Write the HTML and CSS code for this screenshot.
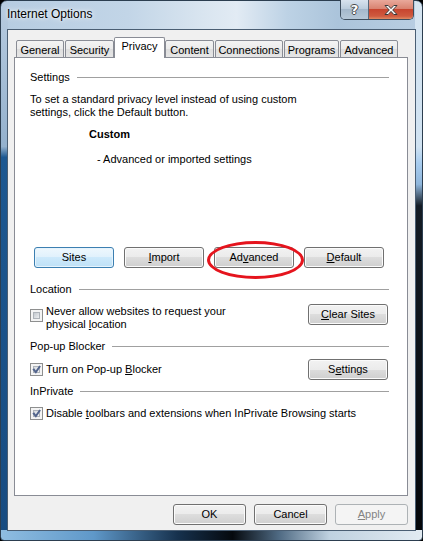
FILE: index.html
```html
<!DOCTYPE html>
<html lang="en">

<head>
    <meta charset="UTF-8">
    <meta name="viewport" content="width=device-width, initial-scale=1.0">
    <title>Internet Options</title>
    <link rel="stylesheet" href="styles.css">
</head>

<body>
    <div class="window">
        <div class="titlebar">
            <p class="title">Internet Options</p>
            <div class="caption">
                <span class="cap-btn help">?</span>
                <span class="cap-btn close">
                    <svg width="16" height="12" viewBox="0 0 16 12">
                        <path d="M2 1.5h3.2L8 4.6l2.8-3.1H14L9.7 6 14 10.5h-3.2L8 7.4l-2.8 3.1H2L6.3 6z" fill="#fff" stroke="#3a3a3a" stroke-width="1" stroke-linejoin="round"/>
                    </svg>
                </span>
            </div>
        </div>

        <div class="client">
            <div class="tabs">
                <span class="tab w-general">General</span>
                <span class="tab w-security">Security</span>
                <span class="tab w-privacy active">Privacy</span>
                <span class="tab w-content">Content</span>
                <span class="tab w-connections">Connections</span>
                <span class="tab w-programs">Programs</span>
                <span class="tab w-advanced">Advanced</span>
            </div>

            <div class="panel">
                <div class="group-title">Settings</div>
                <p class="desc">To set a standard privacy level instead of using custom<br>settings, click the Default button.</p>
                <p class="level">Custom</p>
                <p class="level-info">- Advanced or imported settings</p>

                <div class="btn-row">
                    <button class="btn default">Sites</button>
                    <button class="btn"><u>I</u>mport</button>
                    <button class="btn marked">Ad<u>v</u>anced<span class="circle"></span></button>
                    <button class="btn"><u>D</u>efault</button>
                </div>

                <div class="group-title location-title">Location</div>
                <div class="option first">
                    <div class="check-label top">
                        <span class="check"></span>
                        <span>Never allow websites to request your<br>physical <u>l</u>ocation</span>
                    </div>
                    <button class="btn side"><u>C</u>lear Sites</button>
                </div>

                <div class="group-title">Pop-up Blocker</div>
                <div class="option second">
                    <div class="check-label">
                        <span class="check checked">
                            <svg width="13" height="13" viewBox="0 0 13 13"><path d="M2.4 6.6l1.7-1.3 1.7 2.3 3.5-5.2 1.6 1.1-5 7.2z" fill="#52648c"/></svg>
                        </span>
                        <span>Turn on Pop-up <u>B</u>locker</span>
                    </div>
                    <button class="btn side">S<u>e</u>ttings</button>
                </div>

                <div class="group-title private-title">InPrivate</div>
                <div class="option third">
                    <div class="check-label">
                        <span class="check checked">
                            <svg width="13" height="13" viewBox="0 0 13 13"><path d="M2.4 6.6l1.7-1.3 1.7 2.3 3.5-5.2 1.6 1.1-5 7.2z" fill="#52648c"/></svg>
                        </span>
                        <span>Disable <u>t</u>oolbars and extensions when InPrivate Browsing starts</span>
                    </div>
                </div>
            </div>

            <div class="footer">
                <button class="btn foot">OK</button>
                <button class="btn foot">Cancel</button>
                <button class="btn foot" disabled><u>A</u>pply</button>
            </div>
        </div>
    </div>
</body>

</html>
```

FILE: styles.css
```css
* {
    margin: 0;
    padding: 0;
}

body {
    font-family: "Liberation Sans", Arial, sans-serif;
    font-size: 11px;
    line-height: 13px;
    color: #000;
    background-color: #000;
    width: 423px;
    height: 541px;
    overflow: hidden;
}

/* window frame */
.window {
    box-sizing: border-box;
    width: 423px;
    height: 541px;
    display: flex;
    flex-direction: column;
    padding: 0 6px 9px 6px;
    border: 1px solid #2c3e50;
    border-radius: 7px 7px 4px 4px;
    background:
        linear-gradient(to right, #8fbde1 0%, #5f98c9 22%, #16314d 42%, #05090e 55%, #4f6a83 66%, #bfd1e0 78%, #e2ebf2 100%) left bottom / 100% 10px no-repeat,
        linear-gradient(to bottom, #b8cce0 0%, #94b1cd 27%, #1d5891 29%, #174b80 100%) left top / 7px 100% no-repeat,
        linear-gradient(to bottom, #d6e5f1 0%, #d0e2f1 27%, #a9cdef 30%, #8fb6db 34%, #141c25 38%, #040609 100%) right top / 7px 100% no-repeat,
        linear-gradient(to right, #b6cce1 0%, #c2d5e7 30%, #d9e5f0 48%, #e2ebf4 56%, #bdd2e5 68%, #abc4db 80%, #b9cee2 100%);
}

.titlebar {
    display: flex;
    height: 28px;
}

.title {
    padding: 7px 0 0 0;
    font-size: 12px;
    line-height: 13px;
    color: #000;
    text-shadow: 0 0 6px rgba(255, 255, 255, 0.95), 0 0 3px rgba(255, 255, 255, 0.9);
}

.caption {
    display: flex;
    margin: -1px 2px 0 auto;
    height: 19px;
    border: 1px solid #3e4e5e;
    border-top: 0;
    border-radius: 0 0 5px 5px;
    overflow: hidden;
}

.cap-btn {
    display: flex;
    align-items: center;
    justify-content: center;
    height: 19px;
}

.help {
    width: 27px;
    border-right: 1px solid #56687a;
    background: linear-gradient(#d8e3ee, #bccddd 45%, #a4b8cb 50%, #b6c8d8);
    font-family: "DejaVu Sans", sans-serif;
    font-weight: bold;
    font-size: 13px;
    color: #fff;
    text-shadow: -1px 0 #4a4a4a, 1px 0 #4a4a4a, 0 -1px #4a4a4a, 0 1px #4a4a4a;
}

.close {
    width: 44px;
    background: linear-gradient(#e9a99b, #d98371 45%, #c7452f 50%, #cf5a3f 85%, #e08a63);
}

/* client area */
.client {
    flex: 1;
    display: flex;
    flex-direction: column;
    padding: 0 7px 5px 6px;
    border: 1px solid #4a5e73;
    background-color: #f0f0f0;
}

.tabs {
    position: relative;
    z-index: 1;
    display: flex;
    align-items: flex-end;
    gap: 1px;
    padding: 7px 0 0 2px;
    margin-bottom: -1px;
}

.tab {
    box-sizing: border-box;
    height: 18px;
    padding-top: 2px;
    line-height: 14px;
    text-align: center;
    border: 1px solid #898c95;
    border-radius: 2px 2px 0 0;
    background: linear-gradient(#f3f3f3, #ebebeb 50%, #dedede 50%, #e6e6e6);
}

.tab.active {
    height: 21px;
    padding-top: 1px;
    margin: 0 -1px;
    border-bottom: 0;
    background: #fff;
}

.w-general { width: 48px; }
.w-security { width: 49px; }
.w-privacy { width: 51px; }
.w-content { width: 49px; }
.w-connections { width: 68px; }
.w-programs { width: 55px; }
.w-advanced { width: 58px; }

.panel {
    flex: 1;
    padding: 13px 18px 0 15px;
    border: 1px solid #898c95;
    background-color: #fff;
}

.group-title {
    display: flex;
    align-items: center;
}

.group-title::after {
    content: "";
    flex: 1;
    height: 1px;
    margin-left: 7px;
    background-color: #a0a0a0;
}

.desc {
    margin-top: 9px;
}

.level {
    margin-top: 9px;
    padding-left: 59px;
    font-weight: bold;
}

.level-info {
    margin-top: 12px;
    padding-left: 67px;
}

/* buttons */
.btn {
    position: relative;
    box-sizing: border-box;
    width: 80px;
    height: 21px;
    font-family: inherit;
    font-size: 11px;
    line-height: 13px;
    color: #000;
    border: 1px solid #707070;
    border-radius: 3px;
    background: linear-gradient(#f2f2f2, #ebebeb 50%, #dddddd 50%, #cfcfcf);
    box-shadow: inset 0 0 0 1px #fbfbfb;
}

.btn.default {
    border-color: #3c7fb1;
    background: linear-gradient(#eef7fd, #e0f1fc 50%, #cde9fb 50%, #bfe1f6);
    box-shadow: inset 0 0 0 1px #e6f4fd;
}

.btn:disabled {
    color: #838383;
    border-color: #adb2b5;
    background: #f4f4f4;
    box-shadow: none;
}

.btn-row {
    display: flex;
    gap: 10px;
    margin-top: 81px;
    padding-left: 4px;
}

.circle {
    position: absolute;
    left: -8px;
    top: -7px;
    width: 97px;
    height: 38px;
    box-sizing: border-box;
    border: 3px solid #e5141d;
    border-radius: 50%;
}

.location-title {
    margin-top: 15px;
}

.option {
    display: flex;
    justify-content: space-between;
    align-items: center;
}

.option.first {
    align-items: flex-start;
    margin-top: 8px;
}

.option.second {
    margin-top: 6px;
    margin-bottom: 5px;
}

.option.third {
    margin-top: 9px;
}

.option.first + .group-title {
    margin-top: 9px;
}

.check-label {
    display: flex;
    align-items: center;
    gap: 3px;
}

.check-label.top {
    align-items: flex-start;
    margin-top: 1px;
}

.check-label.top .check {
    margin-top: 4px;
}

.side {
    margin-right: 1px;
}

.check {
    position: relative;
    flex: none;
    box-sizing: border-box;
    width: 13px;
    height: 13px;
    padding: 2px;
    border: 1px solid #8e8f8f;
    background-color: #f4f4f4;
}

.check::before {
    content: "";
    display: block;
    box-sizing: border-box;
    width: 100%;
    height: 100%;
    border: 1px solid #aeb3b9;
    background: linear-gradient(135deg, #c4c9cf, #eceef0);
}

.check.checked::before {
    background: linear-gradient(135deg, #d6dade, #f4f5f6);
}

.check svg {
    position: absolute;
    left: -1px;
    top: -1px;
}

.footer {
    display: flex;
    justify-content: flex-end;
    gap: 8px;
    margin-top: 8px;
}

.btn.foot {
    width: 73px;
}
```
